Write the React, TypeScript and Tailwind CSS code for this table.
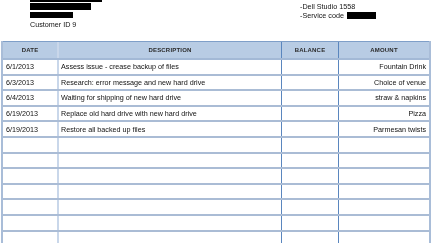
const rows = [
  { date: '6/1/2013', desc: 'Assess issue - crease backup of files', amount: 'Fountain Drink' },
  { date: '6/3/2013', desc: 'Research: error message and new hard drive', amount: 'Choice of venue' },
  { date: '6/4/2013', desc: 'Waiting for shipping of new hard drive', amount: 'straw & napkins' },
  { date: '6/19/2013', desc: 'Replace old hard drive with new hard drive', amount: 'Pizza' },
  { date: '6/19/2013', desc: 'Restore all backed up files', amount: 'Parmesan twists' },
  { date: '', desc: '', amount: '' },
  { date: '', desc: '', amount: '' },
  { date: '', desc: '', amount: '' },
  { date: '', desc: '', amount: '' },
  { date: '', desc: '', amount: '' },
  { date: '', desc: '', amount: '' },
  { date: '', desc: '', amount: '' },
  { date: '', desc: '', amount: '' },
];

export default function App() {
  return (
    <div className="w-[432px] h-[243px] overflow-hidden bg-white">
      {/* own layer keeps the tiny text grayscale-antialiased */}
      <div className="[will-change:transform] text-[#111] font-['Liberation_Sans',sans-serif] text-[7.2px] leading-none">
        <div className="flex h-[41px]">
          <div className="w-[300px] pl-[30px] flex flex-col">
            <div className="w-[72px] h-[2px] bg-black" />
            <div className="w-[61px] h-[7px] bg-black mt-[1px]" />
            <div className="w-[43px] h-[6px] bg-black mt-[2px]" />
            <div className="mt-[3px]">Customer ID 9</div>
          </div>
          <div className="flex flex-col pt-[3px] gap-[2px]">
            <div>-Dell Studio 1558</div>
            <div className="flex items-center">
              <span>-Service code</span>
              <span className="w-[29px] h-[7px] bg-black ml-[3px]" />
            </div>
          </div>
        </div>

        <div className="ml-[1px] w-[430px] border-l-2 border-r-2 border-[#a9bdd8]">
          <div className="flex h-[19px] bg-[#b8cce4] border-t border-[#7f9fc8] border-b-2 border-b-[#a3b9d6] font-bold text-[6px] tracking-[0.2px] text-[#2a2a2a]">
            <div className="w-[56px] flex items-center justify-center border-r-2 border-[#c9d7ea]">DATE</div>
            <div className="w-[223px] flex items-center justify-center border-r border-[#5a86be]">DESCRIPTION</div>
            <div className="w-[57px] flex items-center justify-center border-r border-[#5a86be]">BALANCE</div>
            <div className="flex-1 flex items-center justify-center">AMOUNT</div>
          </div>
          {rows.map((r, i) => (
            <div key={i} className="flex h-[15.6px] border-b-2 border-[#aabcd5]">
              <div className="w-[56px] flex items-center pl-[3px] border-r-2 border-[#c9d7ea]">{r.date}</div>
              <div className="w-[223px] flex items-center pl-[2px] border-r border-[#5a86be]">{r.desc}</div>
              <div className="w-[57px] border-r border-[#5a86be]" />
              <div className="flex-1 flex items-center justify-end pr-[3px]">{r.amount}</div>
            </div>
          ))}
        </div>
      </div>
    </div>
  );
}
